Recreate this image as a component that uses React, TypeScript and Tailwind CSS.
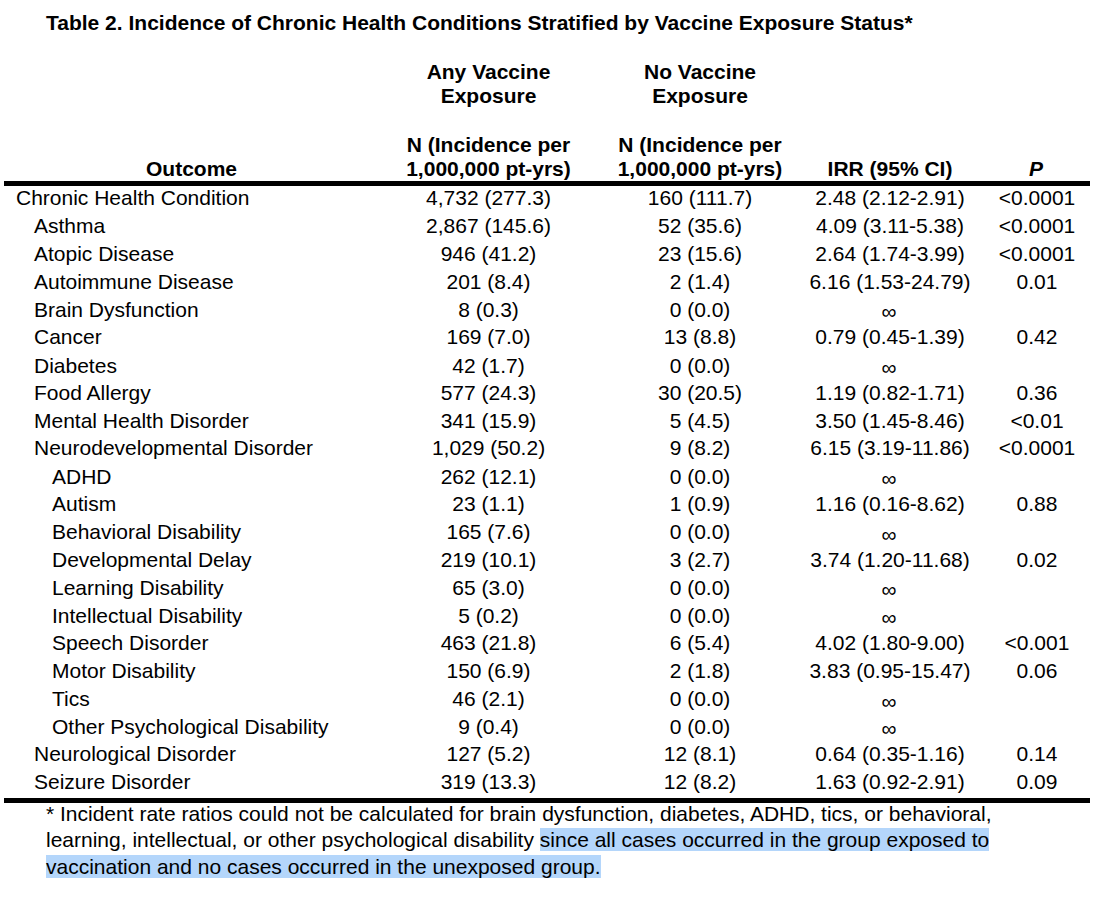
const rows: [number, string, string, string, string, string][] = [
  [0, "Chronic Health Condition", "4,732 (277.3)", "160 (111.7)", "2.48 (2.12-2.91)", "<0.0001"],
  [1, "Asthma", "2,867 (145.6)", "52 (35.6)", "4.09 (3.11-5.38)", "<0.0001"],
  [1, "Atopic Disease", "946 (41.2)", "23 (15.6)", "2.64 (1.74-3.99)", "<0.0001"],
  [1, "Autoimmune Disease", "201 (8.4)", "2 (1.4)", "6.16 (1.53-24.79)", "0.01"],
  [1, "Brain Dysfunction", "8 (0.3)", "0 (0.0)", "∞", ""],
  [1, "Cancer", "169 (7.0)", "13 (8.8)", "0.79 (0.45-1.39)", "0.42"],
  [1, "Diabetes", "42 (1.7)", "0 (0.0)", "∞", ""],
  [1, "Food Allergy", "577 (24.3)", "30 (20.5)", "1.19 (0.82-1.71)", "0.36"],
  [1, "Mental Health Disorder", "341 (15.9)", "5 (4.5)", "3.50 (1.45-8.46)", "<0.01"],
  [1, "Neurodevelopmental Disorder", "1,029 (50.2)", "9 (8.2)", "6.15 (3.19-11.86)", "<0.0001"],
  [2, "ADHD", "262 (12.1)", "0 (0.0)", "∞", ""],
  [2, "Autism", "23 (1.1)", "1 (0.9)", "1.16 (0.16-8.62)", "0.88"],
  [2, "Behavioral Disability", "165 (7.6)", "0 (0.0)", "∞", ""],
  [2, "Developmental Delay", "219 (10.1)", "3 (2.7)", "3.74 (1.20-11.68)", "0.02"],
  [2, "Learning Disability", "65 (3.0)", "0 (0.0)", "∞", ""],
  [2, "Intellectual Disability", "5 (0.2)", "0 (0.0)", "∞", ""],
  [2, "Speech Disorder", "463 (21.8)", "6 (5.4)", "4.02 (1.80-9.00)", "<0.001"],
  [2, "Motor Disability", "150 (6.9)", "2 (1.8)", "3.83 (0.95-15.47)", "0.06"],
  [2, "Tics", "46 (2.1)", "0 (0.0)", "∞", ""],
  [2, "Other Psychological Disability", "9 (0.4)", "0 (0.0)", "∞", ""],
  [1, "Neurological Disorder", "127 (5.2)", "12 (8.1)", "0.64 (0.35-1.16)", "0.14"],
  [1, "Seizure Disorder", "319 (13.3)", "12 (8.2)", "1.63 (0.92-2.91)", "0.09"],
];

const indent = ["pl-[12px]", "pl-[30px]", "pl-[48px]"];

export default function App() {
  return (
    <div className="min-h-[918px] w-[1112px] bg-white text-black font-['Liberation_Sans',Arial,sans-serif]">
      <h1 className="pl-[46px] pt-[11px] text-[21px] font-bold leading-[24px]">
        Table 2. Incidence of Chronic Health Conditions Stratified by Vaccine Exposure Status*
      </h1>

      <div className="ml-[4px] mt-[25px] w-[1086px]">
        <div className="grid grid-cols-[371px_227px_196px_194px_98px] items-end border-b-[5px] border-black text-[21px] font-bold leading-[24.25px] text-center">
          <div className="pl-[4px]">Outcome</div>
          <div>
            Any Vaccine
            <br />
            Exposure
            <br />
            <br />
            N (Incidence per
            <br />
            1,000,000 pt-yrs)
          </div>
          <div>
            No Vaccine
            <br />
            Exposure
            <br />
            <br />
            N (Incidence per
            <br />
            1,000,000 pt-yrs)
          </div>
          <div className="pr-[10px]">IRR (95% CI)</div>
          <div className="pr-[10px] italic">P</div>
        </div>

        <div className="border-b-[5px] border-black">
          {rows.map(([lvl, name, any, none, irr, p]) => (
            <div
              key={name}
              className="grid h-[27.8px] grid-cols-[371px_227px_196px_194px_98px] items-center text-[21px] leading-[24px] -translate-y-[2px]"
            >
              <div className={indent[lvl]}>{name}</div>
              <div className="text-center">{any}</div>
              <div className="text-center">{none}</div>
              {irr === "∞" ? (
                <div className="pr-[12px] pt-[5px] text-center text-[21px]">∞</div>
              ) : (
                <div className="pr-[10px] text-center">{irr}</div>
              )}
              <div className="pr-[8px] text-center">{p}</div>
            </div>
          ))}
        </div>
      </div>

      <p className="-mt-[2px] pl-[46px] text-[21px] leading-[26.5px]">
        * Incident rate ratios could not be calculated for brain dysfunction, diabetes, ADHD, tics, or behavioral,
        <br />
        learning, intellectual, or other psychological disability{" "}
        <span className="bg-[#b4d6fb]">
          since all cases occurred in the group exposed to
          <br />
          vaccination and no cases occurred in the unexposed group.
        </span>
      </p>
    </div>
  );
}
